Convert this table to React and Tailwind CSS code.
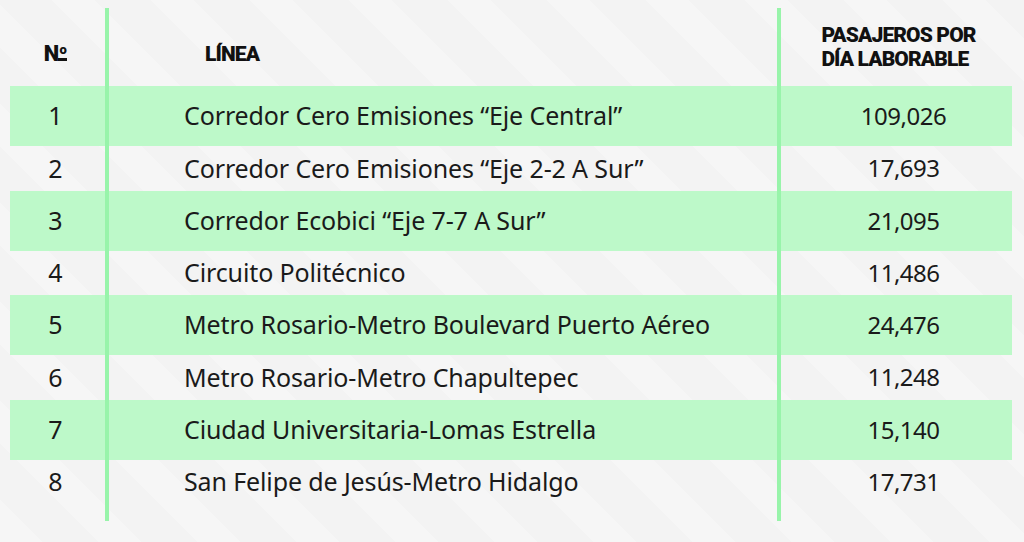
import React from "react";

const rows = [
  ["1", "Corredor Cero Emisiones “Eje Central”", "109,026"],
  ["2", "Corredor Cero Emisiones “Eje 2-2 A Sur”", "17,693"],
  ["3", "Corredor Ecobici “Eje 7-7 A Sur”", "21,095"],
  ["4", "Circuito Politécnico", "11,486"],
  ["5", "Metro Rosario-Metro Boulevard Puerto Aéreo", "24,476"],
  ["6", "Metro Rosario-Metro Chapultepec", "11,248"],
  ["7", "Ciudad Universitaria-Lomas Estrella", "15,140"],
  ["8", "San Felipe de Jesús-Metro Hidalgo", "17,731"],
];

function Row({ num, line, count, green }) {
  return (
    <div className={`flex ${green ? "h-[60px] bg-[#bdf9c9]" : "h-[44.5px]"}`}>
      <div className="w-[99px] flex items-center justify-center pr-[4px] border-r-4 border-[#98f4aa]">
        {num}
      </div>
      <div className="w-[672px] flex items-center pl-[75px] border-r-4 border-[#98f4aa] tracking-[-0.005em]">
        {line}
      </div>
      <div className="flex-1 flex items-center justify-center pl-[14px] text-[24px] tracking-[-0.02em]">{count}</div>
    </div>
  );
}

export default function App() {
  return (
    <div className="w-[1024px] h-[542px] bg-[#f4f4f4] bg-[repeating-linear-gradient(45deg,#f6f6f6_0px,#f6f6f6_30px,#f3f3f3_30px,#f3f3f3_70px)] pt-2 px-[10px] text-[#1a1a1a] font-['Noto_Sans',sans-serif] text-[25px]">
      <div className="w-[1002px]">
        <div className="flex h-[78px] font-['Roboto',sans-serif] font-black tracking-[-0.035em] text-[#111]">
          <div className="w-[99px] flex items-end justify-center pr-[4px] pb-[21px] text-[22px] border-r-4 border-[#98f4aa]">
            <span className="flex items-start leading-none">
              N
              <span className="flex flex-col items-center text-[13px] leading-none">
                <span>o</span>
                <span className="w-[9px] h-[3px] bg-[#111] mt-[2px]" />
              </span>
            </span>
          </div>
          <div className="w-[672px] flex items-end pl-[96px] pb-[21px] text-[21px] leading-none border-r-4 border-[#98f4aa]">
            LÍNEA
          </div>
          <div className="flex-1 flex items-end justify-center pl-[4px] pb-[15px] text-[21px] leading-[24px]">
            <div className="text-left">
              PASAJEROS POR
              <br />
              DÍA LABORABLE
            </div>
          </div>
        </div>
        {rows.map((r, i) => (
          <Row key={r[0]} num={r[0]} line={r[1]} count={r[2]} green={i % 2 === 0} />
        ))}
        <div className="flex h-[17px]">
          <div className="w-[99px] border-r-4 border-[#98f4aa]" />
          <div className="w-[672px] border-r-4 border-[#98f4aa]" />
        </div>
      </div>
    </div>
  );
}
